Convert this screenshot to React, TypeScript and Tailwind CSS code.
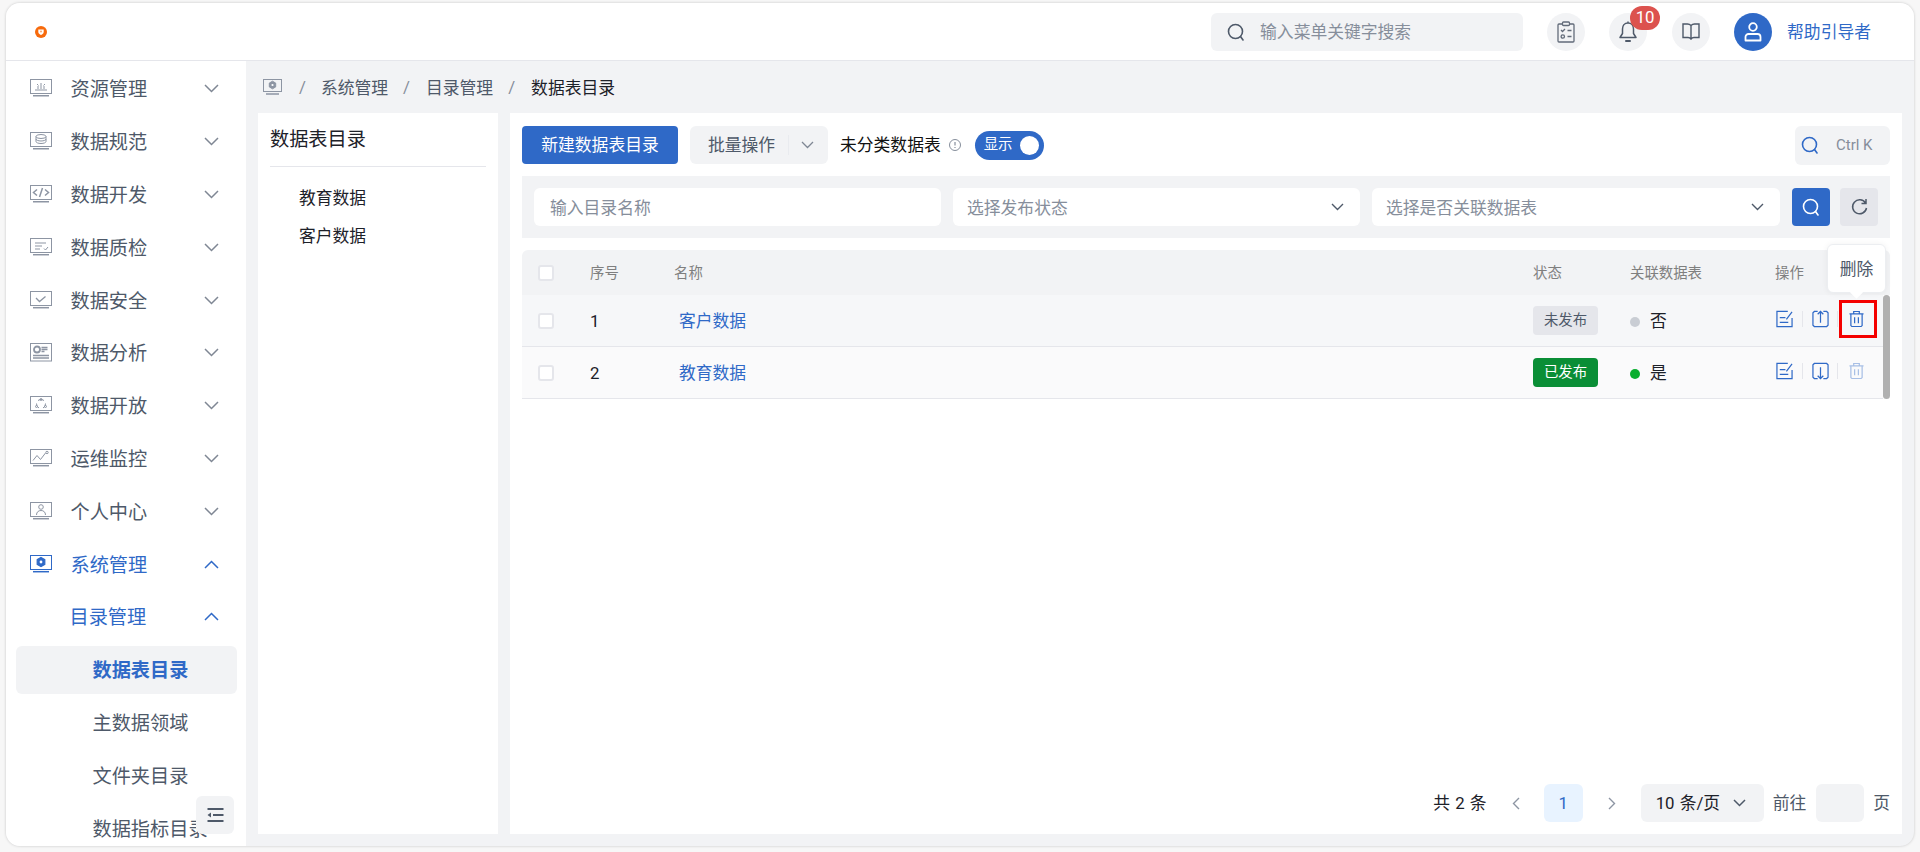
import { ReactNode } from "react";

const BLUE = "#2f69c7";

const Chevron = ({ up = false, className = "text-[#7f8794]" }: { up?: boolean; className?: string }) => (
  <svg width="15" height="9" viewBox="0 0 15 9" fill="none" stroke="currentColor" strokeWidth="1.5" className={className}>
    <path d={up ? "M1 8l6.5-6.5L14 8" : "M1 1l6.5 6.5L14 1"} />
  </svg>
);

const SearchIcon = ({ size = 18, color = "#4e5969" }: { size?: number; color?: string }) => (
  <svg width={size} height={size} viewBox="0 0 18 18" fill="none" stroke={color} strokeWidth="1.6">
    <circle cx="8.5" cy="8.5" r="7" />
    <path d="M13.5 13.5l2.5 3.5" strokeLinecap="round" />
  </svg>
);

// all sidebar icons share the same little monitor, only the glyph inside differs
const Monitor = ({ children, active = false, tall = false }: { children?: ReactNode; active?: boolean; tall?: boolean }) => (
  <svg width="22" height="19" viewBox="0 0 22 19" fill="none" stroke={active ? BLUE : "#8d95a3"} strokeWidth="1" className="shrink-0">
    <rect x="0.5" y="0.5" width="21" height={tall ? 17.5 : 14} />
    {!tall && <path d="M3 16.7h16" strokeWidth="1.5" />}
    {children}
  </svg>
);

const menuIcons: ReactNode[] = [
  <Monitor key="a"><path d="M5 11h12M8 10V7M11 10V4M14 10V7M7 5l1.5 1.5M15 5l-1.5 1.5" /></Monitor>,
  <Monitor key="b"><ellipse cx="11" cy="4.5" rx="5" ry="2" /><path d="M6 4.500v5c0 1.100 2.200 2 5 2s5-.9 5-2v-5M6 7c0 1.100 2.200 2 5 2s5-.9 5-2" /></Monitor>,
  <Monitor key="c"><path d="M7 4.500L3.500 7.500 7 10.500M15 4.500l3.500 3-3.500 3M12.500 3l-3 9" strokeWidth="1.500" /></Monitor>,
  <Monitor key="d"><path d="M5 5h11M5 8h7M5 11h5M14 10.500l1.500 1.500 2.500-3" /></Monitor>,
  <Monitor key="e"><path d="M6 7l3.500 3.500 6-5" strokeWidth="1.300" /></Monitor>,
  <Monitor key="f" tall><circle cx="7" cy="6.500" r="3" strokeWidth="1.800" /><path d="M11.500 4.500h6M11.500 6.500h6M11.500 8.500h3M3 12.500h16M3 15h16" strokeWidth="1.300" /></Monitor>,
  <Monitor key="g"><path d="M8 4.500a4.500 4.500 0 0 1 6 0M6.500 7.500a4.500 4.500 0 0 0 2.500 4.500M15.500 7.500a4.500 4.500 0 0 1-2.500 4.500" /><circle cx="11" cy="3.500" r="1" /><circle cx="6.500" cy="10.500" r="1" /><circle cx="15.500" cy="10.500" r="1" /></Monitor>,
  <Monitor key="h"><path d="M3 11.500l4-5 3.500 4 5-6.500" /><circle cx="17" cy="3.500" r="1.200" /></Monitor>,
  <Monitor key="i"><circle cx="11" cy="5" r="2.300" /><path d="M6.500 13c0-3 2-4.500 4.500-4.500s4.500 1.500 4.500 4.500" /></Monitor>,
  <Monitor key="j" active><path d="M11 2.500l3.800 2.200v4.600L11 11.500 7.200 9.300V4.700z" fill={BLUE} strokeWidth="1.200" /><circle cx="11" cy="7" r="1.400" fill="#fff" stroke="none" /></Monitor>,
];

const menus = ["资源管理", "数据规范", "数据开发", "数据质检", "数据安全", "数据分析", "数据开放", "运维监控", "个人中心"];
const subMenus = ["主数据领域", "文件夹目录", "数据指标目录"];

const Sidebar = () => (
  <aside className="relative h-full w-[240px] shrink-0 overflow-hidden bg-white pt-[1.6px] text-[19.2px] leading-none text-[#4e5969]">
    {menus.map((m, i) => (
      <div key={m} className="flex h-[52.8px] items-center pl-[24px] pr-[27px]">
        {menuIcons[i]}
        <span className="ml-[18.5px] flex-1 pt-[2px]">{m}</span>
        <Chevron />
      </div>
    ))}
    <div className="flex h-[52.8px] items-center pl-[24px] pr-[27px] text-[#2f69c7]">
      {menuIcons[9]}
      <span className="ml-[18.5px] flex-1 pt-[2px]">系统管理</span>
      <Chevron up className="text-[#2f69c7]" />
    </div>
    <div className="flex h-[52.8px] items-center pl-[63.5px] pr-[27px] text-[#2f69c7]">
      <span className="flex-1 pt-[2px]">目录管理</span>
      <Chevron up className="text-[#2f69c7]" />
    </div>
    <div className="ml-[10px] mr-[9px] mt-[2.4px] flex h-[48px] items-center rounded-[6px] bg-[#f2f3f5] pl-[76.5px] pt-[2px] font-bold text-[#2f69c7]">
      数据表目录
    </div>
    {subMenus.map((m, i) => (
      <div key={m} className={`flex h-[52.8px] items-center pl-[86.5px] pt-[2px] ${i === 0 ? "mt-[2.4px]" : ""}`}>
        {m}
      </div>
    ))}
    <div className="absolute bottom-[12px] left-[190px] flex h-[38px] w-[38px] items-center justify-center rounded-[6px] bg-[#f2f3f5]">
      <svg width="17" height="14" viewBox="0 0 17 14" fill="none" stroke="#4e5969" strokeWidth="1.800">
        <path d="M0.500 1h16M6 7h10.500M0.500 13h16" />
        <path d="M4 4.500v5L0.500 7z" fill="#4e5969" stroke="none" />
      </svg>
    </div>
  </aside>
);

const RoundBtn = ({ children }: { children: ReactNode }) => (
  <div className="relative flex h-[38px] w-[38px] shrink-0 items-center justify-center rounded-full bg-[#f2f3f5]">{children}</div>
);

const Header = () => (
  <header className="flex h-[58px] shrink-0 items-center border-b border-[#e5e6eb] bg-white pl-[29px] pr-[43px]">
    <svg width="12" height="12" viewBox="0 0 12 12">
      <circle cx="6" cy="6" r="6" fill="#f76a0c" />
      <path d="M3.300 3.500h5.400v2.600c0 1.500-1.300 2.400-2.700 3-1.400-.6-2.700-1.500-2.700-3z" fill="#fff" />
      <circle cx="6" cy="5.600" r="1" fill="#f9a66c" />
    </svg>
    <div className="ml-auto flex h-[38px] w-[312px] items-center rounded-[6px] bg-[#f2f3f5] pl-[16px] text-[16.8px] text-[#868e9b]">
      <SearchIcon />
      <span className="ml-[15px] pt-[2px]">输入菜单关键字搜索</span>
    </div>
    <div className="ml-[24px]">
      <RoundBtn>
        <svg width="18" height="22" viewBox="0 0 18 22" fill="none" stroke="#626b79" strokeWidth="1.300">
          <rect x="1" y="3" width="16" height="18" rx="1" />
          <rect x="5.500" y="1" width="7" height="3.500" rx="1" fill="#f2f3f5" />
          <path d="M4 9l1.500 1.500L8 8M10.500 9.500h4M10.500 15.500h4" />
          <circle cx="5.800" cy="15.500" r="1.700" />
        </svg>
      </RoundBtn>
    </div>
    <div className="ml-[24px]">
      <RoundBtn>
        <svg width="20" height="24" viewBox="0 0 20 24" fill="none" stroke="#4e5969" strokeWidth="1.500">
          <path d="M10 3c-3.500 0-5.500 2.800-5.500 6v4.500L2 17.500h16l-2.500-4V9c0-3.200-2-6-5.500-6zM10 1.500V3" strokeLinejoin="round" />
          <path d="M8 21h4" strokeWidth="2" strokeLinecap="round" />
        </svg>
        <span className="absolute left-[21px] top-[-7px] flex h-[24px] w-[30px] items-center justify-center rounded-full bg-[#dc524e] text-[16.800px] leading-none text-white">10</span>
      </RoundBtn>
    </div>
    <div className="ml-[25px]">
      <RoundBtn>
        <svg width="18" height="17" viewBox="0 0 18 17" fill="none" stroke="#4e5969" strokeWidth="1.400">
          <path d="M9 2.500C8 1.500 7 1 5.500 1H1v13.500h5c1.500 0 2.300.5 3 1.500.7-1 1.500-1.500 3-1.500h5V1h-4.500C11 1 10 1.500 9 2.500zM9 2.500V15" />
        </svg>
      </RoundBtn>
    </div>
    <div className="ml-[24px] flex h-[38px] w-[38px] shrink-0 items-center justify-center rounded-full bg-[#2f69c7]">
      <svg width="18" height="20" viewBox="0 0 18 20" fill="none" stroke="#fff" strokeWidth="1.800">
        <circle cx="9" cy="5" r="3.800" />
        <path d="M4.500 12h9a3 3 0 0 1 3 3v3.500h-15V15a3 3 0 0 1 3-3z" strokeLinejoin="round" />
      </svg>
    </div>
    <span className="ml-[15px] pt-[2px] text-[16.8px] text-[#2f69c7]">帮助引导者</span>
  </header>
);

const Breadcrumb = () => (
  <div className="flex h-[52px] shrink-0 items-center pl-[5px] text-[16.8px] leading-none text-[#4e5969]">
    <svg width="19" height="17" viewBox="0 0 19 17" fill="none" stroke="#8d95a3" strokeWidth="1">
      <rect x="0.500" y="0.500" width="18" height="12" />
      <path d="M3 15h13" strokeWidth="1.500" />
      <path d="M9.500 2.200l3.200 1.900v3.800L9.500 9.800 6.300 7.900V4.100z" fill="#8d95a3" />
      <circle cx="9.500" cy="6" r="1.100" fill="#fff" stroke="none" />
    </svg>
    <span className="ml-[17px] text-[#868e9b]">/</span>
    <span className="ml-[15px] pt-[2px]">系统管理</span>
    <span className="ml-[15px] text-[#868e9b]">/</span>
    <span className="ml-[16px] pt-[2px]">目录管理</span>
    <span className="ml-[15px] text-[#868e9b]">/</span>
    <span className="ml-[16px] pt-[2px] text-[#1d2129]">数据表目录</span>
  </div>
);

const TreePanel = () => (
  <div className="h-full w-[240px] shrink-0 bg-white px-[12px] text-[#1d2129]">
    <div className="flex h-[54px] items-center border-b border-[#e5e6eb] text-[19.2px] leading-none">数据表目录</div>
    <div className="mt-[12px] flex h-[38px] items-center pl-[29px] pt-[2px] text-[16.8px]">教育数据</div>
    <div className="flex h-[38px] items-center pl-[29px] pt-[2px] text-[16.8px]">客户数据</div>
  </div>
);

const SelectBox = ({ label, w }: { label: string; w: string }) => (
  <div className={`flex h-[38px] items-center justify-between rounded-[6px] bg-white pl-[14px] pr-[16px] text-[16.8px] text-[#868e9b] ${w}`}>
    <span className="pt-[3px]">{label}</span>
    <svg width="13" height="8" viewBox="0 0 13 8" fill="none" stroke="#4e5969" strokeWidth="1.400">
      <path d="M1 1l5.500 5.500L12 1" />
    </svg>
  </div>
);

const Check = () => (
  <span className="block h-[16px] w-[16px] rounded-[3px] border-2 border-[#e5e6eb] bg-white" />
);

const EditIcon = () => (
  <svg width="17" height="18" viewBox="0 0 18 18" fill="none" stroke={BLUE} strokeWidth="1.300">
    <path d="M12.500 1H1v16h16V8M4 7.500h6M4 12.500h9M11 9.500L17 1.500" />
  </svg>
);

const ArrowBoxIcon = ({ down = false }: { down?: boolean }) => (
  <svg width="17" height="18" viewBox="0 0 18 18" fill="none" stroke={BLUE} strokeWidth="1.300">
    {down ? (
      <path d="M6 17H2.500L1 15.500v-13L2.500 1h13L17 2.500v13L15.500 17H12M9 5v12M6 14l3 3 3-3" />
    ) : (
      <path d="M6 1H2.500L1 2.500v13L2.500 17h13l1.500-1.500v-13L15.500 1H12M9 13V1M6 4l3-3 3 3" />
    )}
  </svg>
);

const TrashIcon = ({ faded = false }: { faded?: boolean }) => (
  <svg width="15" height="18" viewBox="0 0 16 18" fill="none" stroke={BLUE} strokeWidth="1.300" className={faded ? "opacity-40" : ""}>
    <path d="M0.500 3.500h15M5 3.500V1h6v2.500M2 3.500v12.500l1 1h10l1-1V3.500M6 7v6.500M10 7v6.500" />
  </svg>
);

const rows = [
  { no: 1, name: "客户数据", published: false, linked: "否", bg: "bg-[#f6f7f9]" },
  { no: 2, name: "教育数据", published: true, linked: "是", bg: "bg-[#fafafb]" },
];

const DataTable = () => (
  <div className="relative mt-[12px]">
    <div className="flex h-[45px] items-center rounded-t-[6px] bg-[#f2f3f5] pt-[1px] text-[14.4px] text-[#7f7f7f]">
      <div className="w-[68px] pl-[16px]"><Check /></div>
      <div className="w-[84px] pt-[1px]">序号</div>
      <div className="flex-1 pt-[1px]">名称</div>
      <div className="w-[97px] pt-[1px]">状态</div>
      <div className="w-[145px] pt-[1px]">关联数据表</div>
      <div className="w-[115px] pt-[1px]">操作</div>
    </div>
    <div className="flex">
      <div className="flex-1">
        {rows.map((r) => (
          <div key={r.no} className={`flex h-[52px] items-center border-b border-[#e5e6eb] text-[16.8px] ${r.bg}`}>
            <div className="w-[68px] pl-[16px]"><Check /></div>
            <div className="w-[84px] pt-[3px] text-[#1d2129]">{r.no}</div>
            <div className="flex-1 pl-[5px] pt-[3px] text-[#2f69c7]">{r.name}</div>
            <div className="w-[97px]">
              {r.published ? (
                <span className="flex h-[29px] w-[65px] items-center justify-center rounded-[4px] bg-[#0a8e36] text-[14.4px] text-white">已发布</span>
              ) : (
                <span className="flex h-[29px] w-[65px] items-center justify-center rounded-[4px] bg-[#e5e6eb] text-[14.4px] text-[#4e5969]">未发布</span>
              )}
            </div>
            <div className="flex w-[145px] items-center pt-[3px] text-[#1d2129]">
              <span className={`h-[10px] w-[10px] rounded-full ${r.published ? "bg-[#0aae2f]" : "bg-[#c9cdd4]"}`} />
              <span className="ml-[10px]">{r.linked}</span>
            </div>
            <div className="flex w-[108px] items-center pb-[3px] pl-px">
              <EditIcon />
              <span className="ml-[9px] h-[16px] w-px bg-[#e5e6eb]" />
              <span className="ml-[9px] flex"><ArrowBoxIcon down={r.published} /></span>
              <span className="ml-[8px] h-[16px] w-px bg-[#e5e6eb]" />
              <span className="ml-[11px] flex"><TrashIcon faded={r.published} /></span>
            </div>
          </div>
        ))}
      </div>
      <div className="w-[7px] rounded-[4px] bg-[#b0b0b0]" />
    </div>
    <div className="absolute right-[4px] top-[-6px] flex h-[49px] w-[59px] items-center justify-center rounded-[6px] border border-[#eceef1] bg-white pt-[3px] text-[16.8px] text-[#4e5969] shadow-[0_0_6px_rgba(0,0,0,0.06)]">
      删除
      <span className="absolute bottom-[-5px] left-[24px] h-[9px] w-[9px] rotate-45 bg-white" />
    </div>
    <div className="absolute right-[13px] top-[50px] h-[38px] w-[38px] border-[3px] border-[#f40000]" />
  </div>
);

const Pagination = () => (
  <div className="mt-auto flex h-[38px] items-center justify-end text-[16.8px] leading-none text-[#4e5969]">
    <span className="text-[#1d2129] [word-spacing:1px]">共 2 条</span>
    <svg width="8" height="13" viewBox="0 0 8 13" fill="none" stroke="#8d95a3" strokeWidth="1.400" className="ml-[25px]">
      <path d="M7 1L1.500 6.500 7 12" />
    </svg>
    <span className="ml-[24px] flex h-[38px] w-[39px] items-center justify-center rounded-[6px] bg-[#e8f3ff] text-[#2f69c7]">1</span>
    <svg width="8" height="13" viewBox="0 0 8 13" fill="none" stroke="#8d95a3" strokeWidth="1.400" className="ml-[25px]">
      <path d="M1 1l5.500 5.500L1 12" />
    </svg>
    <div className="ml-[25px] flex h-[38px] w-[123px] items-center rounded-[6px] bg-[#f2f3f5] pl-[15px] text-[#1d2129]">
      <span className="[word-spacing:1px]">10 条/页</span>
      <svg width="13" height="8" viewBox="0 0 13 8" fill="none" stroke="#4e5969" strokeWidth="1.500" className="ml-[13px]">
        <path d="M1 1l5.500 5.500L12 1" />
      </svg>
    </div>
    <span className="ml-[9px]">前往</span>
    <span className="ml-[10px] h-[38px] w-[48px] rounded-[6px] bg-[#f2f3f5]" />
    <span className="ml-[9px]">页</span>
  </div>
);

const MainPanel = () => (
  <div className="ml-[12px] flex h-full flex-1 flex-col bg-white px-[12px] pb-[12px] pt-[13px]">
    <div className="flex h-[38px] items-center">
      <button className="flex h-[38px] w-[156px] items-center justify-center rounded-[4px] bg-[#2f69c7] pt-[2px] text-[16.8px] text-white">新建数据表目录</button>
      <div className="ml-[12px] flex h-[38px] w-[138px] items-center rounded-[6px] bg-[#f2f3f5] pl-[18px] text-[16.8px] text-[#4e5969]">
        <span className="pt-[2px]">批量操作</span>
        <span className="ml-[13px] h-[20px] w-px bg-[#e9ebef]" />
        <svg width="13" height="8" viewBox="0 0 13 8" fill="none" stroke="#7f8794" strokeWidth="1.300" className="ml-[12px]">
          <path d="M1 1l5.500 5.500L12 1" />
        </svg>
      </div>
      <span className="ml-[12px] pt-[2px] text-[16.8px] text-[#111]">未分类数据表</span>
      <svg width="12" height="12" viewBox="0 0 12 12" fill="none" stroke="#868e9b" className="ml-[8px]">
        <circle cx="6" cy="6" r="5.500" />
        <path d="M6 3v3.500M6 8v1" strokeWidth="1.200" />
      </svg>
      <div className="ml-[14px] flex h-[29px] w-[69px] items-center rounded-full bg-[#2f69c7] pl-[9px] text-[14.4px] leading-none text-white">
        <span>显示</span>
        <span className="ml-[7px] h-[19px] w-[19px] rounded-full bg-white" />
      </div>
      <div className="ml-auto flex h-[39px] w-[95px] items-center rounded-[6px] bg-[#f2f3f5] pl-[6px] text-[15px] text-[#868e9b]">
        <SearchIcon color={BLUE} />
        <span className="ml-[17px]">Ctrl K</span>
      </div>
    </div>
    <div className="mt-[12px] flex h-[62px] shrink-0 items-center bg-[#f2f3f5] pl-[12px]">
      <div className="flex h-[38px] w-[407px] items-center rounded-[6px] bg-white pl-[16px] pt-[3px] text-[16.8px] text-[#868e9b]">输入目录名称</div>
      <SelectBox label="选择发布状态" w="ml-[12px] w-[407px]" />
      <SelectBox label="选择是否关联数据表" w="ml-[12px] w-[408px]" />
      <div className="ml-[12px] flex h-[38px] w-[38px] items-center justify-center rounded-[4px] bg-[#2f69c7]">
        <SearchIcon color="#fff" />
      </div>
      <div className="ml-[10px] flex h-[38px] w-[38px] items-center justify-center rounded-[4px] bg-[#e5e6eb]">
        <svg width="17" height="18" viewBox="0 0 17 18" fill="none" stroke="#4e5969" strokeWidth="1.500">
          <path d="M14.500 5A7 7 0 1 0 15.500 10M15 1v4.500h-4.500" />
        </svg>
      </div>
    </div>
    <DataTable />
    <Pagination />
  </div>
);

export default function App() {
  return (
    <div className="h-[852px] w-[1920px] overflow-hidden bg-[#f7f7f7] px-[6px] pb-[6px] pt-[3px] font-['Roboto','Noto_Sans_CJK_SC',sans-serif]">
      <div className="flex h-[843px] flex-col overflow-hidden rounded-[14px] bg-[#f2f3f5] shadow-[0_0_3px_rgba(0,0,0,0.2)]">
        <Header />
        <div className="flex min-h-0 flex-1">
          <Sidebar />
          <div className="flex min-w-0 flex-1 flex-col px-[12px] pb-[12px]">
            <Breadcrumb />
            <div className="flex min-h-0 flex-1">
              <TreePanel />
              <MainPanel />
            </div>
          </div>
        </div>
      </div>
    </div>
  );
}
